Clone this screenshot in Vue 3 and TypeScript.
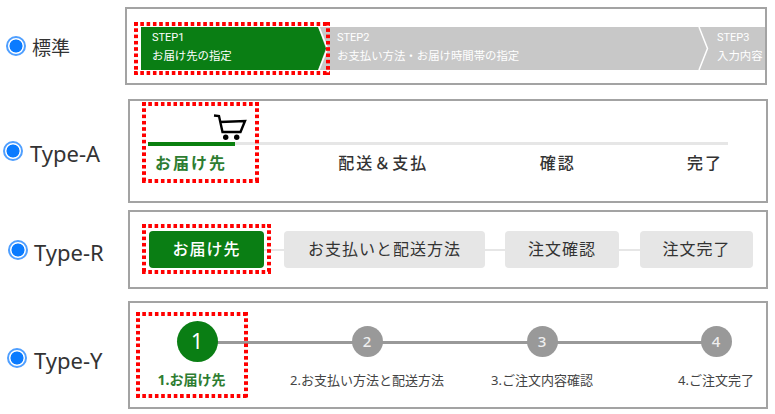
<script setup lang="ts">
const chevronSteps = [
  { step: 'STEP1', text: 'お届け先の指定', cls: 'step-current' },
  { step: 'STEP2', text: 'お支払い方法・お届け時間帯の指定', cls: 'step-middle' },
  { step: 'STEP3', text: '入力内容', cls: 'step-last' },
]
const lineLabels = ['お届け先', '配送＆支払', '確認', '完了']
const pillSteps = [
  { text: 'お届け先', cls: 'pill-a' },
  { text: 'お支払いと配送方法', cls: 'pill-b' },
  { text: '注文確認', cls: 'pill-c' },
  { text: '注文完了', cls: 'pill-d' },
]
const dotSteps = ['1.お届け先', '2.お支払い方法と配送方法', '3.ご注文内容確認', '4.ご注文完了']
</script>

<template>
  <div class="page">
    <div class="row row-std">
      <label class="choice"><input type="radio" checked name="std"><span>標準</span></label>
      <div class="panel panel-std">
        <div class="chevrons">
          <div v-for="s in chevronSteps" :key="s.step" class="chevron-step" :class="s.cls">
            <div class="step-name">{{ s.step }}</div>
            <div class="step-text">{{ s.text }}</div>
            <svg v-if="s.cls !== 'step-last'" class="chevron-line" width="11" height="43" viewBox="0 0 11 43">
              <polyline points="1,0 9.5,21.5 1,43" fill="none" stroke="#fff" stroke-width="1.5" />
            </svg>
          </div>
        </div>
        <div class="marker marker-std"></div>
      </div>
    </div>

    <div class="row row-a">
      <label class="choice"><input type="radio" checked name="a"><span>Type-A</span></label>
      <div class="panel panel-a">
        <div class="line-track">
          <div class="line-done"></div>
          <div class="line-rest"></div>
        </div>
        <div class="line-labels">
          <span v-for="(l, i) in lineLabels" :key="l" :class="{ 'line-current': i === 0 }">{{ l }}</span>
        </div>
        <svg class="cart" width="36" height="28" viewBox="0 0 36 28">
          <path d="M2 2.5 7 3 10.5 19H28.5L33 8 8 9" fill="none" stroke="#000" stroke-width="2.4" />
          <circle cx="13.7" cy="24.3" r="2.7" fill="#000" />
          <circle cx="24.7" cy="24.3" r="2.7" fill="#000" />
        </svg>
        <div class="marker marker-a"></div>
      </div>
    </div>

    <div class="row row-r">
      <label class="choice"><input type="radio" checked name="r"><span>Type-R</span></label>
      <div class="panel panel-r">
        <template v-for="(p, i) in pillSteps" :key="p.text">
          <div v-if="i > 0" class="pill-link"></div>
          <div class="pill" :class="p.cls">{{ p.text }}</div>
        </template>
        <div class="marker marker-r"></div>
      </div>
    </div>

    <div class="row row-y">
      <label class="choice"><input type="radio" checked name="y"><span>Type-Y</span></label>
      <div class="panel panel-y">
        <div class="dot-line"></div>
        <div class="dots">
          <div v-for="(d, i) in dotSteps" :key="d" class="dot-step" :class="{ 'dot-current': i === 0 }">
            <div class="dot-slot"><div class="dot">{{ i + 1 }}</div></div>
            <div class="dot-label">{{ d }}</div>
          </div>
        </div>
        <div class="marker marker-y"></div>
      </div>
    </div>
  </div>
</template>

<style scoped>
.page {
  width: 775px;
  height: 414px;
  padding-top: 7px;
  box-sizing: border-box;
  overflow: hidden;
  background: #fff;
  font-family: "Noto Sans", "Noto Sans CJK JP", sans-serif;
  color: #333;
}

.row {
  display: flex;
  align-items: center;
}
.row-a { margin-top: 14px; }
.row-r { margin-top: 7px; }
.row-y { margin-top: 12px; }

.choice {
  display: flex;
  align-items: center;
  width: 128px;
  box-sizing: border-box;
  font-size: 22px;
  line-height: 26px;
  gap: 6px;
}
.row-std .choice { width: 125px; padding-left: 6px; font-size: 19px; }
.row-a .choice { padding-left: 3px; gap: 7px; }
.row-r .choice { padding-left: 8px; }
.row-y .choice { padding-left: 7px; gap: 7px; margin-top: 6px; }
.choice span { position: relative; top: 2px; }

input[type="radio"] {
  appearance: none;
  flex: none;
  width: 20px;
  height: 20px;
  margin: 0;
  border: 2px solid #4f9fff;
  border-radius: 50%;
  box-sizing: border-box;
  background: radial-gradient(circle, #0a7bff 0 6.2px, #fff 6.8px);
}

.panel {
  position: relative;
  flex: none;
  width: 640px;
  box-sizing: border-box;
  border: 2px solid #a3a3a3;
  background: #fff;
}
.panel-std { width: 642px; height: 78px; padding: 18px 0 0 14px; }
.panel-a { height: 104px; padding: 41px 0 0 18px; }
.panel-r { height: 79px; padding-left: 19px; display: flex; align-items: center; }
.panel-y { height: 108px; padding: 18px 0 0 67px; }

/* dotted red box around the current step */
.marker {
  position: absolute;
  background:
    linear-gradient(90deg, #f00 60%, transparent 60%) top left / 6.3px 4px repeat-x,
    linear-gradient(90deg, #f00 60%, transparent 60%) bottom left / 6.3px 4px repeat-x,
    linear-gradient(180deg, #f00 60%, transparent 60%) top left / 4px 6.3px repeat-y,
    linear-gradient(180deg, #f00 60%, transparent 60%) top right / 4px 6.3px repeat-y;
}
.marker-std { left: 7px; top: 13px; width: 196px; height: 53px; }
.marker-a { left: 12px; top: 1px; width: 117px; height: 81px; }
.marker-r { left: 12px; top: 12px; width: 129px; height: 50px; }
.marker-y { left: 6px; top: 9px; width: 112px; height: 86px; }

/* 標準 */
.chevrons {
  display: flex;
  height: 43px;
  background: #c8c8c8;
  overflow: hidden;
  color: #fff;
}
.chevron-step {
  position: relative;
  flex: none;
  box-sizing: border-box;
  padding-left: 10px;
  white-space: nowrap;
}
.step-current { width: 186px; padding-left: 11px; }
.step-current::before {
  content: "";
  position: absolute;
  inset: 0;
  background: #0a7e14;
  clip-path: polygon(0 0, 177px 0, 185px 50%, 177px 100%, 0 100%);
}
.step-middle { width: 380px; }
.step-last { width: 60px; }
.step-name, .step-text { position: relative; }
.step-name {
  font-family: Roboto, "Noto Sans", sans-serif;
  font-size: 11px;
  line-height: 14px;
  margin-top: 4px;
}
.step-text {
  font-size: 11.4px;
  line-height: 16px;
  margin-top: 3px;
}
.chevron-line {
  position: absolute;
  right: -2px;
  top: 0;
}

/* Type-A */
.line-track {
  display: flex;
  align-items: flex-start;
  width: 580px;
}
.line-done { width: 87px; height: 4px; background: #0a800f; }
.line-rest { flex: 1; height: 3px; background: #e6e6e6; }
.line-labels {
  display: flex;
  justify-content: space-between;
  width: 568px;
  margin: 6px 0 0 7px;
  font-size: 16px;
  line-height: 22px;
  font-weight: 500;
  letter-spacing: 2px;
  white-space: nowrap;
}
.line-current { color: #2e7d32; font-weight: 600; }
.cart {
  position: absolute;
  left: 82px;
  top: 12px;
}

/* Type-R */
.pill {
  flex: none;
  height: 37px;
  border-radius: 4px;
  background: #e6e6e6;
  font-size: 16px;
  line-height: 37px;
  letter-spacing: 1px;
  text-align: center;
  white-space: nowrap;
}
.pill-a { width: 115px; background: #0a7e14; color: #fff; font-weight: 500; }
.pill-b { width: 201px; }
.pill-c { width: 114px; }
.pill-d { width: 113px; }
.pill-link { flex: none; width: 20px; height: 2px; background: #e6e6e6; }
.pill-c + .pill-link { width: 21px; }

/* Type-Y */
.dot-line {
  position: absolute;
  left: 67px;
  top: 38px;
  width: 519px;
  height: 3px;
  background: #999;
}
.dots {
  display: grid;
  grid-template-columns: 170px 175px 174px 0;
}
.dot-step {
  display: flex;
  flex-direction: column;
  align-items: center;
  width: 0;
  white-space: nowrap;
}
.dot-slot {
  display: flex;
  align-items: center;
  height: 41px;
}
.dot {
  position: relative;
  width: 31px;
  height: 31px;
  border-radius: 50%;
  background: #999;
  color: #eee;
  font-size: 15px;
  font-weight: 500;
  line-height: 31px;
  text-align: center;
}
.dot-current .dot {
  width: 41px;
  height: 41px;
  background: #0a7e14;
  color: #fff;
  font-size: 21px;
  font-weight: 400;
  line-height: 41px;
}
.dot-label {
  margin-top: 8px;
  font-size: 13px;
  line-height: 20px;
  color: #444;
}
.dot-current .dot-label {
  margin-right: 11px;
  color: #2e7d32;
  font-size: 14px;
  font-weight: 700;
}
</style>

<style>
html, body { margin: 0; background: #fff; }
</style>
